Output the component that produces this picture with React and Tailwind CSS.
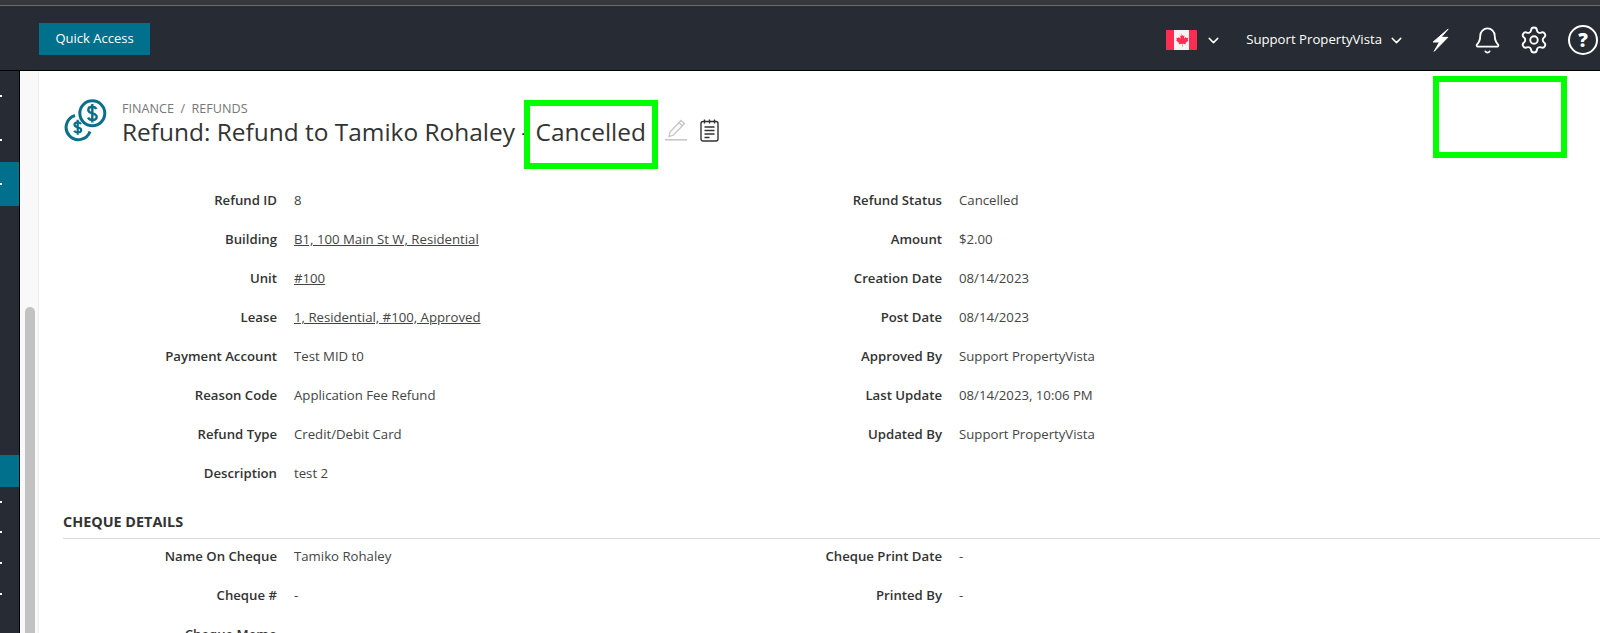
import { ChevronDown, Bell, Settings } from "lucide-react";

const leftRows = [
	["Refund ID", "8"],
	["Building", "B1, 100 Main St W, Residential", true],
	["Unit", "#100", true],
	["Lease", "1, Residential, #100, Approved", true],
	["Payment Account", "Test MID t0"],
	["Reason Code", "Application Fee Refund"],
	["Refund Type", "Credit/Debit Card"],
	["Description", "test 2"],
];

const rightRows = [
	["Refund Status", "Cancelled"],
	["Amount", "$2.00"],
	["Creation Date", "08/14/2023"],
	["Post Date", "08/14/2023"],
	["Approved By", "Support PropertyVista"],
	["Last Update", "08/14/2023, 10:06 PM"],
	["Updated By", "Support PropertyVista"],
];

const Row = ({ label, value, link }) => (
	<div className="flex h-[39px] items-center text-[13.2px]">
		<div className="w-[214px] shrink-0 text-right font-semibold text-[#333]">{label}</div>
		<div className={`ml-[17px] text-[#444] ${link ? "underline" : ""}`}>{value}</div>
	</div>
);

const SideItem = ({ h, active, dot }) => (
	<div className={`flex items-center ${h} ${active ? "bg-[#00708c]" : ""}`}>
		{dot && <div className="h-[2px] w-[2px] bg-white" />}
	</div>
);

const DollarCoins = () => (
	<svg width="44" height="44" viewBox="0 0 44 44" fill="none" stroke="#0b6f8a" strokeWidth="3" className="-mt-[2px]">
		<circle cx="29.300" cy="15.300" r="12.500" />
		<path d="M33.500 11c-.9-1.500-2.400-2.200-4.200-2.200-2.400 0-4 1.300-4 3.100 0 4.400 8.400 2.400 8.400 6.900 0 1.900-1.700 3.200-4.300 3.200-1.900 0-3.500-.8-4.400-2.300M29.300 6v18.500" strokeWidth="2.400" />
		<path d="M12 17.500A12.300 12.300 0 1 0 27 33.500" />
		<path d="M18 26c-.7-1.100-1.900-1.700-3.300-1.700-1.900 0-3.200 1-3.200 2.400 0 3.400 6.700 1.900 6.700 5.300 0 1.500-1.400 2.500-3.500 2.500-1.500 0-2.800-.6-3.500-1.800M14.700 21.700v15" strokeWidth="2.200" />
	</svg>
);

const Flag = () => (
	<svg width="31" height="20" viewBox="0 0 31 20">
		<rect width="31" height="20" fill="#f8f4f4" />
		<rect width="8" height="20" fill="#ff2d4f" />
		<rect x="23" width="8" height="20" fill="#ff2d4f" />
		<path d="M15.500 3.500l1.400 2.600 1.500-.7-.5 3.300 1.900-1.700.5 1.100 2-.3-.6 2.100.8.500-3 2.500.4 1.300-3.400-.4.100 2.700h-.6l.1-2.700-3.400.4.400-1.300-3-2.500.8-.5-.6-2.100 2 .3.500-1.100 1.900 1.700-.5-3.300 1.500.7z" fill="#ff2d4f" />
	</svg>
);

const Bolt = () => (
	<svg width="17" height="24" viewBox="0 0 50 72" fill="white" stroke="white" strokeWidth="3" strokeLinejoin="round">
		<path d="M48 3L3 42h19L6 70l41-42H27z" />
	</svg>
);

const EditPencil = () => (
	<svg width="22" height="22" viewBox="0 0 22 22" fill="none" stroke="#c4c4c4" strokeWidth="1.300">
		<path d="M16 1.500l3.500 3L8.500 16 4 17.500 5 13z" />
		<path d="M14 3.800l3.500 3" />
		<path d="M0 20.800h22" strokeWidth="1.500" />
	</svg>
);

const Notepad = () => (
	<svg width="19" height="23" viewBox="0 0 19 23" fill="none" stroke="#333" strokeWidth="1.400">
		<rect x="1" y="2.500" width="17" height="19.500" rx="2" />
		<path d="M4.500 0.500v4M9.500 0.500v4M14.500 0.500v4M4.500 8h10M4.500 11.500h10M4.500 15h10M4.500 18.500h5" />
	</svg>
);

const App = () => {
	return (
		<div className="relative h-[633px] w-[1600px] overflow-hidden bg-[#272b33] font-['Open_Sans',sans-serif]">
			<div className="h-[5px] bg-[#37383c]" />
			<div className="h-px bg-[#6b6c70]" />

			<header className="flex h-[65px] items-center border-b border-black pr-[2px] pl-[39px] text-white">
				<button className="mt-[2px] h-[32px] w-[111px] bg-[#00708c] text-[13px]">Quick Access</button>
				<div className="mt-[4px] ml-auto flex items-center">
					<Flag />
					<ChevronDown size={17} strokeWidth={2} className="ml-[8px]" />
					<span className="ml-[24px] text-[13.2px]">Support PropertyVista</span>
					<ChevronDown size={17} strokeWidth={2} className="ml-[6px]" />
					<span className="ml-[27px]">
						<Bolt />
					</span>
					<Bell size={29} strokeWidth={1.5} className="ml-[24px]" />
					<Settings size={30} strokeWidth={1.5} className="ml-[17px]" />
					<div className="ml-[19px] flex h-[30px] w-[30px] items-center justify-center rounded-full border-2 border-white text-[19px] leading-none font-extrabold">?</div>
				</div>
			</header>

			<div className="flex h-[562px]">
				<aside className="w-[19px] shrink-0 pt-[3px]">
					<SideItem h="h-[44px]" dot />
					<SideItem h="h-[44px]" dot />
					<SideItem h="h-[44px]" active dot />
					<SideItem h="h-[249px]" />
					<SideItem h="h-[32px]" active />
					<SideItem h="h-[29px]" dot />
					<SideItem h="h-[31px]" dot />
					<SideItem h="h-[31px]" dot />
					<SideItem h="h-[31px]" dot />
				</aside>

				<div className="flex w-[20px] shrink-0 flex-col justify-end border-r border-l border-r-[#ececec] border-l-black bg-[#f9f9f9] pr-[3px] pl-[5px]">
					<div className="h-[326px] rounded-t-[5px] bg-[#c2c2c2]" />
				</div>

				<main className="flex-1 bg-white pt-[29px] pl-[24px]">
					<div className="flex items-start">
						<DollarCoins />
						<div className="ml-[15px]">
							<div className="text-[12.6px] leading-[17px] text-[#777]">FINANCE&nbsp; /&nbsp; REFUNDS</div>
							<div className="flex items-center text-[24.45px] leading-[30px] text-[#333]">
								Refund: Refund to Tamiko Rohaley - Cancelled
								<span className="mb-[4px] ml-[19px]">
									<EditPencil />
								</span>
								<span className="mb-[4px] ml-[13px]">
									<Notepad />
								</span>
							</div>
						</div>
					</div>

					<div className="mt-[34px] flex">
						<div className="w-[665px]">
							{leftRows.map(([label, value, link]) => (
								<Row key={label} label={label} value={value} link={link} />
							))}
						</div>
						<div>
							{rightRows.map(([label, value]) => (
								<Row key={label} label={label} value={value} />
							))}
						</div>
					</div>

					<div className="mt-[18px] h-[28px] border-b border-[#ddd] text-[14.4px] font-bold text-[#333]">CHEQUE DETAILS</div>

					<div className="-mt-[2px] flex">
						<div className="w-[665px]">
							<Row label="Name On Cheque" value="Tamiko Rohaley" />
							<Row label="Cheque #" value="-" />
							<Row label="Cheque Memo" value="" />
						</div>
						<div>
							<Row label="Cheque Print Date" value="-" />
							<Row label="Printed By" value="-" />
						</div>
					</div>
				</main>
			</div>

			{/* green annotation boxes drawn over the screenshot */}
			<div className="absolute top-[100px] left-[524px] h-[69px] w-[134px] border-[6px] border-[#00ff00]" />
			<div className="absolute top-[76px] left-[1433px] h-[82px] w-[134px] border-[6px] border-[#00ff00]" />
		</div>
	);
};

export default App;
